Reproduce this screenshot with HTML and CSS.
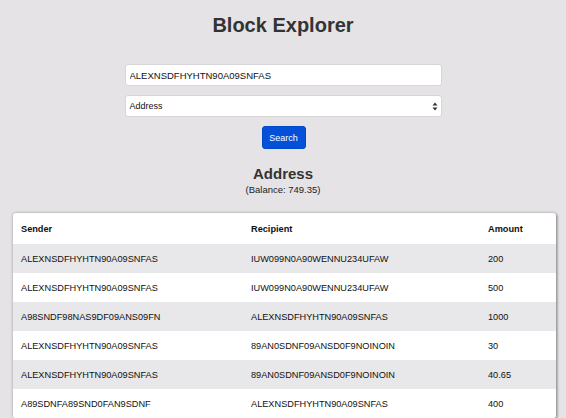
FILE: index.html
```html
<!DOCTYPE html>
<html>
<head>
<meta charset="utf-8">
<link rel="stylesheet" href="styles.css">
</head>
<body>
<div class="page">
  <h1 class="title">Block Explorer</h1>
  <form class="search">
    <input class="field" type="text" value="ALEXNSDFHYHTN90A09SNFAS">
    <div class="select">
      <span>Address</span>
      <svg class="arrows" width="6" height="9" viewBox="0 0 6 9"><path d="M0.5 3.5 L3 0.5 L5.5 3.5 Z M0.5 5.5 L3 8.5 L5.5 5.5 Z" fill="#333"/></svg>
    </div>
    <button class="btn" type="button">Search</button>
  </form>
  <h2 class="heading">Address</h2>
  <div class="balance">(Balance: 749.35)</div>
  <div class="card">
    <table class="tx">
      <thead>
        <tr><th class="c1">Sender</th><th class="c2">Recipient</th><th class="c3">Amount</th></tr>
      </thead>
      <tbody>
        <tr><td>ALEXNSDFHYHTN90A09SNFAS</td><td>IUW099N0A90WENNU234UFAW</td><td>200</td></tr>
        <tr><td>ALEXNSDFHYHTN90A09SNFAS</td><td>IUW099N0A90WENNU234UFAW</td><td>500</td></tr>
        <tr><td>A98SNDF98NAS9DF09ANS09FN</td><td>ALEXNSDFHYHTN90A09SNFAS</td><td>1000</td></tr>
        <tr><td>ALEXNSDFHYHTN90A09SNFAS</td><td>89AN0SDNF09ANSD0F9NOINOIN</td><td>30</td></tr>
        <tr><td>ALEXNSDFHYHTN90A09SNFAS</td><td>89AN0SDNF09ANSD0F9NOINOIN</td><td>40.65</td></tr>
        <tr><td>A89SDNFA89SND0FAN9SDNF</td><td>ALEXNSDFHYHTN90A09SNFAS</td><td>400</td></tr>
      </tbody>
    </table>
  </div>
</div>
</body>
</html>
```

FILE: styles.css
```css
html, body {
  margin: 0;
  padding: 0;
  background: #e5e3e6;
  font-family: "Liberation Sans", Arial, sans-serif;
  color: #222;
}
.page {
  display: flex;
  flex-direction: column;
  align-items: center;
  padding-top: 12px;
}
.title {
  margin: 0;
  font-size: 20px;
  line-height: 26px;
  font-weight: bold;
  color: #333;
}
.search {
  display: flex;
  flex-direction: column;
  align-items: center;
  gap: 9px;
  margin-top: 26px;
}
.field, .select {
  box-sizing: border-box;
  width: 317px;
  height: 22px;
  background: #fff;
  border: 1px solid #d6d5d8;
  border-radius: 3px;
  font-family: "Liberation Sans", Arial, sans-serif;
  font-size: 9.5px;
  color: #111;
}
.field {
  padding: 0 0 0 4px;
  margin: 0;
  outline: none;
}
.select {
  display: flex;
  align-items: center;
  justify-content: space-between;
  padding: 0 3px 0 4px;
  font-size: 9px;
}
.btn {
  box-sizing: border-box;
  width: 44px;
  height: 23px;
  margin-left: 1px;
  background: #0550d8;
  color: #fff;
  border: 1px solid #0048c8;
  border-radius: 3px;
  font-family: "Liberation Sans", Arial, sans-serif;
  font-size: 9px;
  padding: 0;
}
.heading {
  margin: 16px 0 0;
  font-size: 15px;
  line-height: 18px;
  font-weight: bold;
  color: #333;
}
.balance {
  font-size: 9.5px;
  line-height: 12px;
  margin-top: 1px;
  color: #222;
}
.card {
  align-self: stretch;
  margin: 17px 10px 0 13px;
  background: #fff;
  border-radius: 3px;
  box-shadow: 0 0 3px rgba(0,0,0,0.35), 2px 1px 2px rgba(0,0,0,0.2);
  overflow: hidden;
}
.tx {
  width: 100%;
  border-collapse: collapse;
  font-size: 9.2px;
}
.tx th {
  text-align: left;
  font-weight: bold;
  height: 31px;
  padding: 0 0 0 8px;
  color: #111;
}
.tx td {
  height: 29px;
  padding: 0 0 0 8px;
  color: #111;
}
.tx .c1 { width: 222px; }
.tx .c2 { width: 229px; }
.tx tbody tr:nth-child(odd) { background: #e8e7e9; }
.tx tbody tr:nth-child(even) { background: #fff; }
```
